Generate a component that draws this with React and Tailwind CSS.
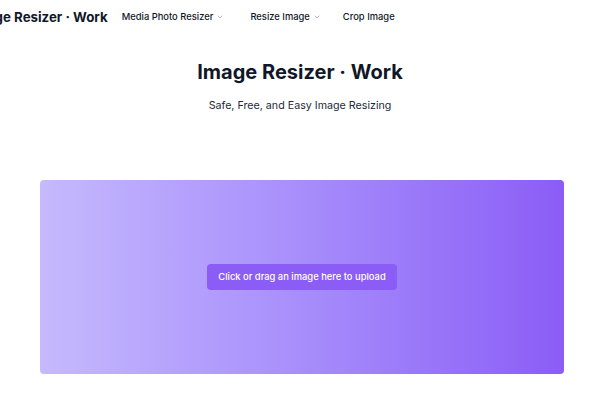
import { ChevronDown } from 'lucide-react';

const NavItem = ({ label, dropdown, className = '' }) => (
  <div className={`flex items-center gap-[3px] text-[9.4px] leading-[14px] font-medium text-gray-900 whitespace-nowrap ${className}`}>
    <span>{label}</span>
    {dropdown && <ChevronDown size={8} strokeWidth={1.5} className="text-gray-500" />}
  </div>
);

export default function App() {
  return (
    <div className="min-h-screen bg-white overflow-hidden" style={{ fontFamily: 'Inter, "Noto Sans", sans-serif' }}>
      {/* Header */}
      <header className="h-[34px] flex items-center">
        <div className="flex items-center -ml-[29px]">
          <span className="text-[13.3px] leading-[20px] font-bold text-gray-900 whitespace-nowrap mr-[14px]">Image Resizer · Work</span>
          <NavItem label="Media Photo Resizer" dropdown className="mr-[26px]" />
          <NavItem label="Resize Image" dropdown className="mr-[22px]" />
          <NavItem label="Crop Image" />
        </div>
      </header>

      {/* Hero */}
      <div className="text-center pt-[24px]">
        <h1 className="text-[20px] leading-[28px] font-bold text-gray-900">Image Resizer · Work</h1>
        <p className="mt-[12px] text-[10.7px] leading-[16px] text-gray-800">Safe, Free, and Easy Image Resizing</p>
      </div>

      {/* Upload area */}
      <div className="px-10 mt-[66px]">
        <div className="w-[524px] h-[194px] rounded-[4px] bg-gradient-to-r from-[#c6b9fd] to-[#8b5cf6] flex items-center justify-center cursor-pointer">
          <button className="h-[26px] px-[11px] rounded-[4px] bg-[#8b5cf6] text-white text-[9.4px] font-medium">
            Click or drag an image here to upload
          </button>
        </div>
      </div>
    </div>
  );
}
